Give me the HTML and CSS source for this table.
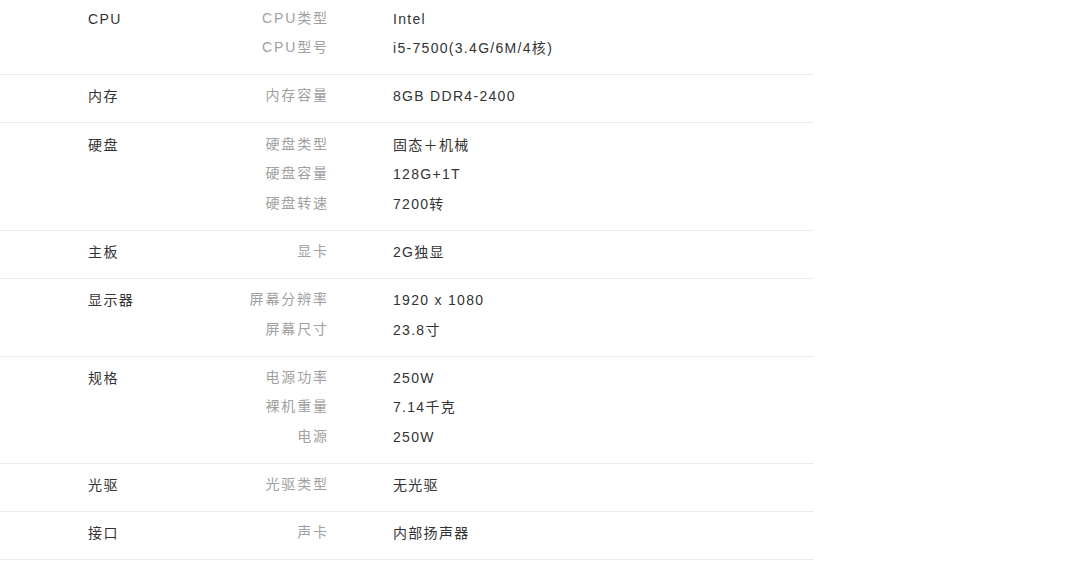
FILE: index.html
```html
<!DOCTYPE html>
<html lang="zh">
<head>
<meta charset="utf-8">
<link rel="stylesheet" href="styles.css">
</head>
<body>
<div class="spec-table">
  <div class="row">
    <div class="cat">CPU</div>
    <div class="items">
      <div class="item"><span class="label">CPU类型</span><span class="value">Intel</span></div>
      <div class="item"><span class="label">CPU型号</span><span class="value">i5-7500(3.4G/6M/4核)</span></div>
    </div>
  </div>
  <div class="row">
    <div class="cat">内存</div>
    <div class="items">
      <div class="item"><span class="label">内存容量</span><span class="value">8GB DDR4-2400</span></div>
    </div>
  </div>
  <div class="row">
    <div class="cat">硬盘</div>
    <div class="items">
      <div class="item"><span class="label">硬盘类型</span><span class="value">固态＋机械</span></div>
      <div class="item"><span class="label">硬盘容量</span><span class="value">128G+1T</span></div>
      <div class="item"><span class="label">硬盘转速</span><span class="value">7200转</span></div>
    </div>
  </div>
  <div class="row">
    <div class="cat">主板</div>
    <div class="items">
      <div class="item"><span class="label">显卡</span><span class="value">2G独显</span></div>
    </div>
  </div>
  <div class="row">
    <div class="cat">显示器</div>
    <div class="items">
      <div class="item"><span class="label">屏幕分辨率</span><span class="value">1920 x 1080</span></div>
      <div class="item"><span class="label">屏幕尺寸</span><span class="value">23.8寸</span></div>
    </div>
  </div>
  <div class="row">
    <div class="cat">规格</div>
    <div class="items">
      <div class="item"><span class="label">电源功率</span><span class="value">250W</span></div>
      <div class="item"><span class="label">裸机重量</span><span class="value">7.14千克</span></div>
      <div class="item"><span class="label">电源</span><span class="value">250W</span></div>
    </div>
  </div>
  <div class="row">
    <div class="cat">光驱</div>
    <div class="items">
      <div class="item"><span class="label">光驱类型</span><span class="value">无光驱</span></div>
    </div>
  </div>
  <div class="row">
    <div class="cat">接口</div>
    <div class="items">
      <div class="item"><span class="label">声卡</span><span class="value">内部扬声器</span></div>
    </div>
  </div>
</div>
</body>
</html>
```
FILE: styles.css
```css
html, body {
  margin: 0;
  padding: 0;
  background: #fff;
}
body {
  font-family: "Liberation Sans", "Noto Sans CJK SC", sans-serif;
  font-size: 14px;
  letter-spacing: 1.4px;
}
.spec-table {
  width: 814px;
  margin-top: -2.75px;
}
.row {
  display: flex;
  border-bottom: 1px solid #ebebeb;
  padding: 7.25px 0 10.5px;
}
.cat {
  width: 140px;
  padding-left: 88px;
  color: #333;
  line-height: 29.5px;
}
.items {
  display: flex;
  flex-direction: column;
}
.item {
  display: flex;
  line-height: 29.5px;
}
.label {
  width: 101px;
  text-align: right;
  color: #a0a0a0;
  letter-spacing: 1.9px;
  position: relative;
  top: -1px;
}
.value {
  margin-left: 64px;
  color: #333;
  letter-spacing: 1.3px;
}
```
